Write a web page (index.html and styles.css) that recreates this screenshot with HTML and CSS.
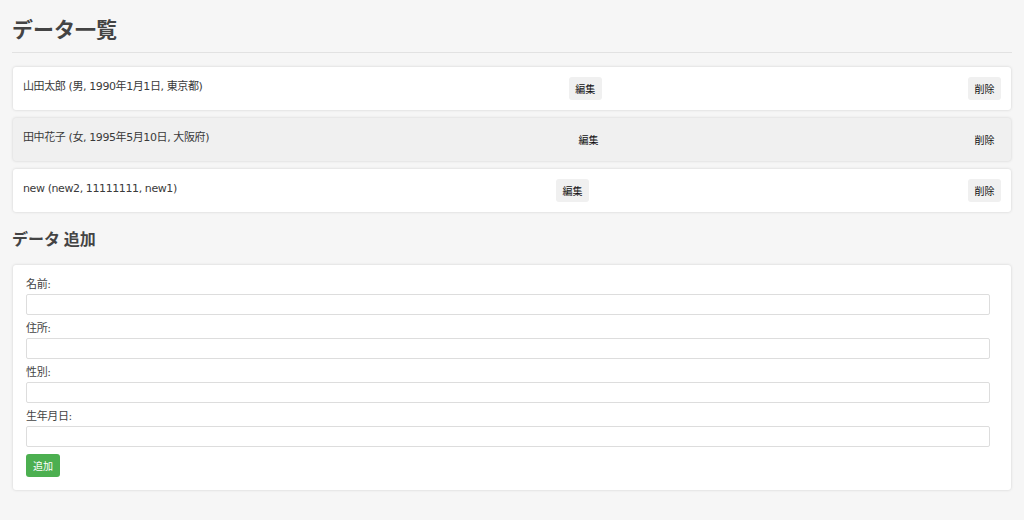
FILE: index.html
```html
<!DOCTYPE html>
<html lang="ja">
<head>
<meta charset="utf-8">
<title>データ一覧</title>
<link rel="stylesheet" href="styles.css">
</head>
<body>
<h1 class="title">データ一覧</h1>
<ul class="list">
  <li class="item">
    <span class="item-text">山田太郎 (男, 1990年1月1日, 東京都)</span>
    <button class="btn">編集</button>
    <button class="btn">削除</button>
  </li>
  <li class="item item-hover">
    <span class="item-text">田中花子 (女, 1995年5月10日, 大阪府)</span>
    <button class="btn">編集</button>
    <button class="btn">削除</button>
  </li>
  <li class="item">
    <span class="item-text">new (new2, 11111111, new1)</span>
    <button class="btn">編集</button>
    <button class="btn">削除</button>
  </li>
</ul>
<h2 class="subtitle">データ 追加</h2>
<form class="form">
  <label class="label">名前:</label>
  <input class="input" type="text">
  <label class="label">住所:</label>
  <input class="input" type="text">
  <label class="label">性別:</label>
  <input class="input" type="text">
  <label class="label">生年月日:</label>
  <input class="input" type="text">
  <button class="btn-add" type="button">追加</button>
</form>
</body>
</html>
```
FILE: styles.css
```css
html, body {
  margin: 0;
  padding: 0;
}
body {
  background: #f6f6f6;
  padding: 12px 12px;
  font-family: "DejaVu Sans", "Noto Sans CJK JP", sans-serif;
  color: #333;
}
.title {
  margin: 0;
  font-family: "Noto Sans CJK JP", sans-serif;
  font-size: 21px;
  line-height: 32px;
  font-weight: bold;
  color: #444;
  padding-bottom: 8px;
  border-bottom: 1px solid #e2e2e2;
  margin-bottom: 14px;
}
.list {
  list-style: none;
  margin: 0;
  padding: 0 1px;
  display: flex;
  flex-direction: column;
  gap: 8px;
}
.item {
  display: flex;
  justify-content: space-between;
  align-items: center;
  background: #fff;
  border-radius: 3px;
  box-shadow: 0 0 3px rgba(0, 0, 0, 0.16);
  padding: 10px 10px;
}
.item-hover {
  background: #f0f0f0;
}
.item-text {
  font-size: 11px;
  line-height: 14px;
  letter-spacing: -0.4px;
  color: #3a3a3a;
  margin-top: -3px;
}
.btn {
  height: 23px;
  padding: 0 6.5px;
  border: none;
  border-radius: 3px;
  background: #f0f0f0;
  font-family: "Noto Sans CJK JP", sans-serif;
  font-size: 10px;
  font-weight: normal;
  color: #111;
}
.subtitle {
  margin: 14px 0 0;
  font-family: "Noto Sans CJK JP", sans-serif;
  font-size: 16px;
  line-height: 24px;
  color: #444;
}
.form {
  margin: 15px 1px 0;
  background: #fff;
  border-radius: 3px;
  box-shadow: 0 0 3px rgba(0, 0, 0, 0.16);
  padding: 12px 21px 13px 13px;
  display: flex;
  flex-direction: column;
  align-items: flex-start;
}
.label {
  font-size: 11px;
  letter-spacing: -0.35px;
  line-height: 16px;
  color: #444;
  margin-bottom: 1px;
}
.input {
  box-sizing: border-box;
  width: 100%;
  height: 21px;
  margin: 0 0 6px;
  border: 1px solid #ddd;
  border-radius: 2px;
  background: #fff;
}
.btn-add {
  height: 23px;
  padding: 0 7px;
  margin-top: 1px;
  border: none;
  border-radius: 3px;
  background: #4caf50;
  color: #fff;
  font-family: "Noto Sans CJK JP", sans-serif;
  font-size: 10px;
  font-weight: normal;
}
```
